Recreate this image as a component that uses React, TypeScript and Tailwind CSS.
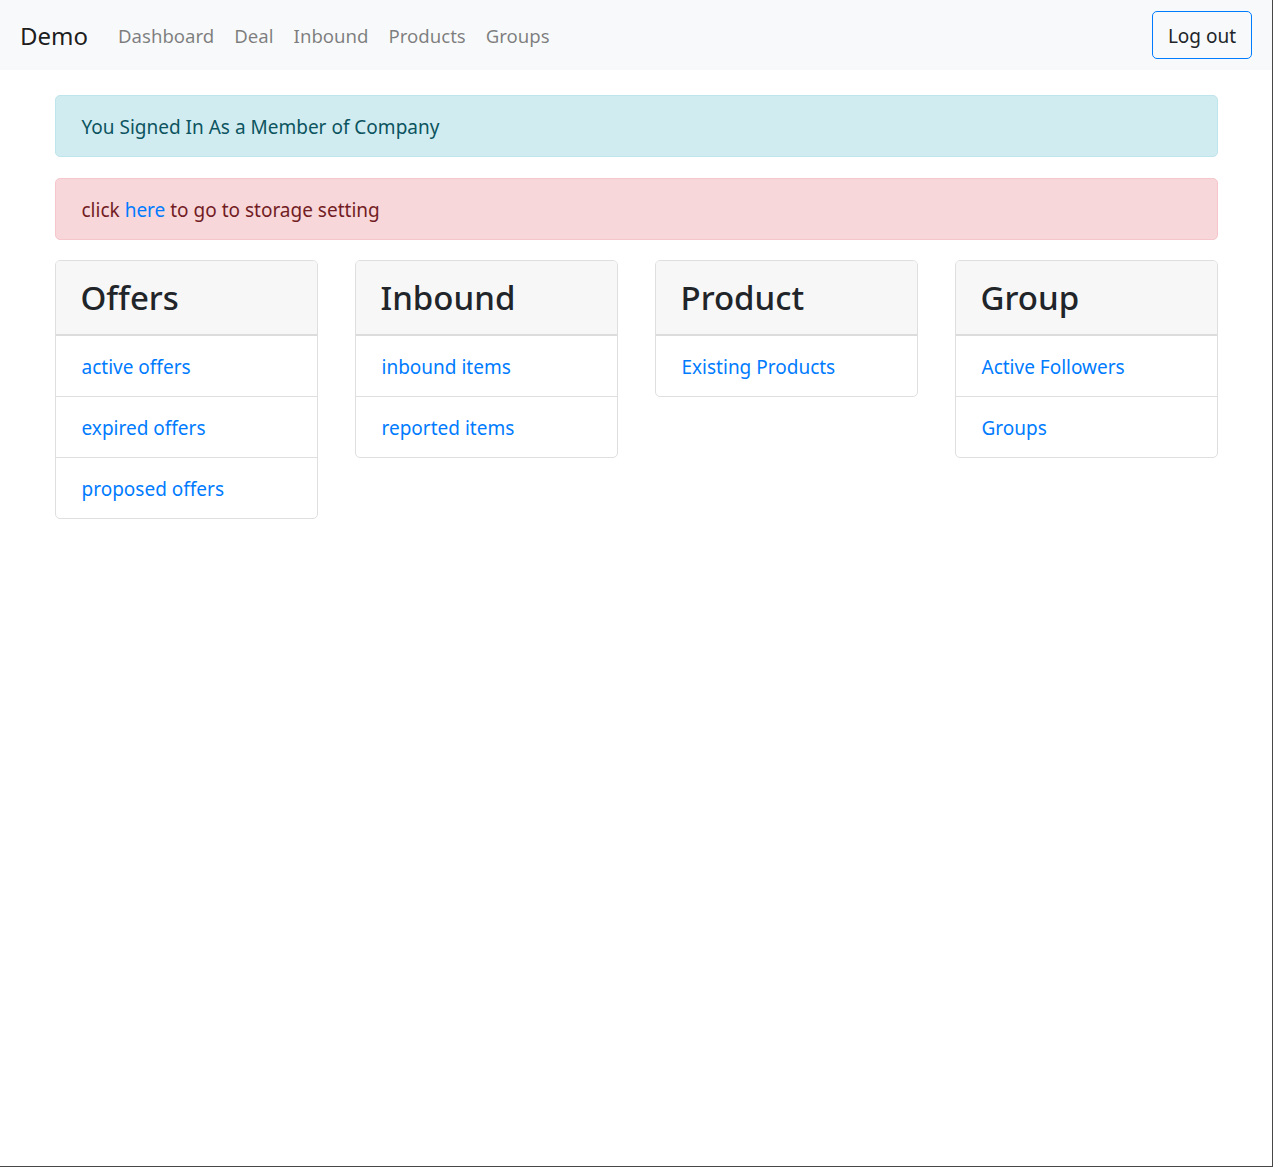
import React from 'react';

const font = { fontFamily: '"Segoe UI", "Noto Sans", "Open Sans", sans-serif' };

const cards = [
  { title: 'Offers', items: ['active offers', 'expired offers', 'proposed offers'] },
  { title: 'Inbound', items: ['inbound items', 'reported items'] },
  { title: 'Product', items: ['Existing Products'] },
  { title: 'Group', items: ['Active Followers', 'Groups'] },
];

const navLinks = ['Dashboard', 'Deal', 'Inbound', 'Products', 'Groups'];

export default function App() {
  return (
    <div
      className="h-[1167px] overflow-hidden border-r border-b border-[#474747] bg-white text-[#212529]"
      style={font}
    >
      {/* Navbar */}
      <nav className="h-[70px] bg-[#f8f9fa] px-[20px] flex items-center justify-between">
        <div className="flex items-center">
          <a href="#" className="text-[24px] leading-[38px] text-[rgba(0,0,0,0.9)] mr-[20px] pt-[2px]">
            Demo
          </a>
          <ul className="flex items-center">
            {navLinks.map((l) => (
              <li key={l}>
                <a href="#" className="block px-[10px] text-[18.6px] leading-[30px] pt-[2px] text-[rgba(0,0,0,0.5)]">
                  {l}
                </a>
              </li>
            ))}
          </ul>
        </div>
        <button className="h-[48px] w-[100px] rounded-[5px] border border-[#007bff] text-[19px] leading-[30px] pt-[1px] text-[#212529] bg-transparent">
          Log out
        </button>
      </nav>

      <div className="w-[1163px] mx-auto pt-[25px]">
        {/* Alerts */}
        <div className="rounded-[5px] border border-[#bee5eb] bg-[#d1ecf1] text-[#0c5460] px-[26px] pt-[16px] pb-[14px] text-[19px] leading-[30px] mb-[21px]">
          You Signed In As a Member of Company
        </div>
        <div className="rounded-[5px] border border-[#f5c6cb] bg-[#f8d7da] text-[#721c24] px-[26px] pt-[16px] pb-[14px] text-[19px] leading-[30px] mb-[20px]">
          click <a href="#" className="text-[#007bff]">here</a> to go to storage setting
        </div>

        {/* Cards */}
        <div className="grid grid-cols-4 gap-x-[37px] items-start">
          {cards.map((c) => (
            <div key={c.title} className="rounded-[5px] border border-[#dfdfdf] overflow-hidden">
              <div className="h-[75px] bg-[#f7f7f7] border-b-2 border-[#dcdcdc] px-[25px] flex items-center">
                <h2 className="text-[33px] leading-[48px] font-medium text-[#212529]">{c.title}</h2>
              </div>
              {c.items.map((it, i) => (
                <div
                  key={it}
                  className={`px-[26px] pt-[2px] flex items-center ${i > 0 ? 'border-t border-[#dfdfdf] h-[61px]' : 'h-[60px]'}`}
                >
                  <a href="#" className="text-[19px] leading-[30px] text-[#007bff]">
                    {it}
                  </a>
                </div>
              ))}
            </div>
          ))}
        </div>
      </div>
    </div>
  );
}
